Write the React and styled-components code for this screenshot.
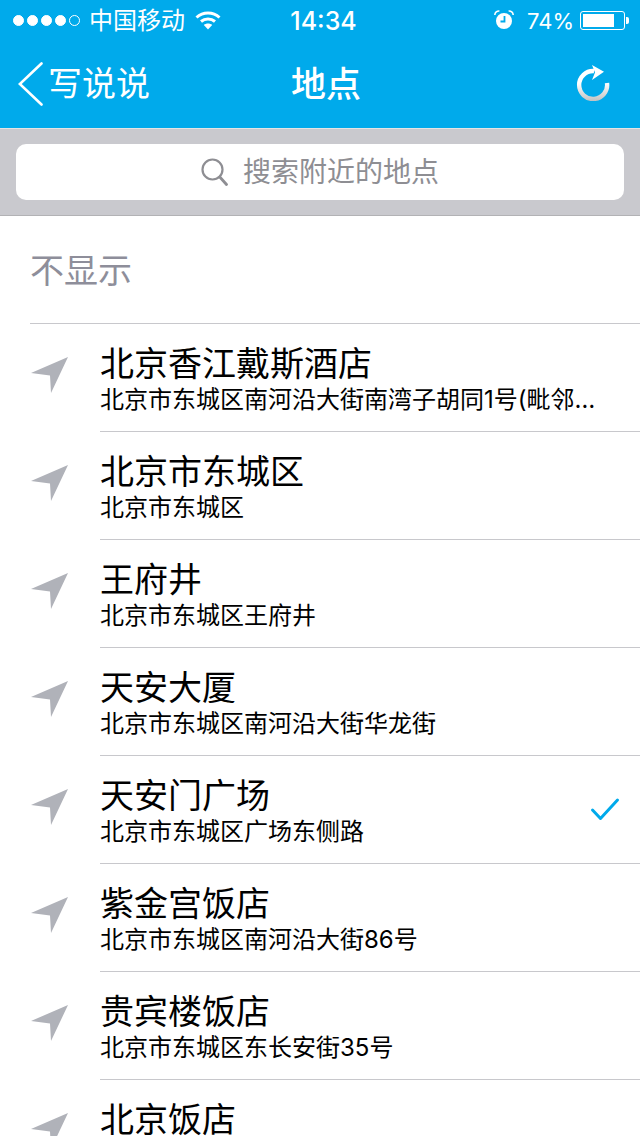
import styled, { createGlobalStyle } from 'styled-components';

const GlobalStyle = createGlobalStyle`
    html, body {
        margin: 0;
        padding: 0;
        background: #fff;
    }
    * {
        box-sizing: border-box;
    }
`;

const Page = styled.div`
    width: 640px;
    height: 1136px;
    overflow: hidden;
    background: #fff;
    font-family: "Inter", "Noto Sans CJK SC", sans-serif;
`;

const Header = styled.header`
    height: 128px;
    background: #00aaeb;
    color: #fff;
`;

const StatusBar = styled.div`
    height: 40px;
    display: grid;
    grid-template-columns: 1fr auto 1fr;
    align-items: center;
    padding: 0 11px 0 13px;
`;

const StatusLeft = styled.div`
    display: flex;
    align-items: center;
`;

const StatusRight = styled.div`
    display: flex;
    align-items: center;
    justify-content: flex-end;
`;

const Signal = styled.div`
    display: flex;
    gap: 3px;
    margin-right: 9px;
`;

const Dot = styled.span`
    width: 11px;
    height: 11px;
    border-radius: 50%;
    border: 1px solid #fff;
    background: ${(p) => (p.$on ? '#fff' : 'transparent')};
`;

const Carrier = styled.span`
    font-size: 24px;
    line-height: 30px;
    margin: 2px 10px 0 0;
`;

const Clock = styled.span`
    font-size: 25px;
    font-weight: 500;
    line-height: 30px;
    margin: 2px 0 0 5px;
`;

const Percent = styled.span`
    font-size: 22px;
    line-height: 30px;
    margin: 1px 6px 0 13px;
`;

const Battery = styled.div`
    width: 45px;
    height: 19px;
    border: 1px solid #fff;
    border-radius: 3px;
    padding: 2px;
    margin-right: 4px;
    position: relative;

    &::after {
        content: '';
        position: absolute;
        right: -5px;
        top: 5px;
        width: 3px;
        height: 7px;
        background: #fff;
        border-radius: 0 2px 2px 0;
    }
`;

const BatteryFill = styled.div`
    width: 80%;
    height: 100%;
    background: #fff;
`;

const NavBar = styled.nav`
    height: 88px;
    display: grid;
    grid-template-columns: 1fr auto 1fr;
    align-items: center;
    padding: 0 6px 0 18px;
`;

const BackLink = styled.div`
    display: flex;
    align-items: center;
    gap: 5px;
`;

const BackText = styled.span`
    font-size: 34px;
    line-height: 44px;
`;

const NavTitle = styled.h1`
    margin: 0;
    font-size: 35px;
    font-weight: 500;
    line-height: 44px;
`;

const NavRight = styled.div`
    display: flex;
    justify-content: flex-end;
    padding: 0 24px 2px 0;
`;

const SearchWrap = styled.div`
    height: 88px;
    padding: 15px 16px 15px;
    background: #c9c9ce;
    border-top: 1px solid #e4e4e4;
    border-bottom: 1px solid #b2b2b5;
`;

const SearchBox = styled.div`
    height: 56px;
    background: #fff;
    border-radius: 10px;
    display: flex;
    align-items: center;
    justify-content: center;
    gap: 15px;
`;

const SearchText = styled.span`
    font-size: 28px;
    line-height: 36px;
    color: #8e8e93;
`;

const NoneRow = styled.div`
    height: 108px;
    margin-left: 30px;
    display: flex;
    align-items: center;
    padding-bottom: 3px;
    border-bottom: 1px solid #c8c8cc;
    font-size: 34px;
    color: #8e8e9a;
`;

const Row = styled.div`
    height: 108px;
    display: flex;
    padding-left: 30px;
`;

const RowIcon = styled.div`
    width: 70px;
    padding-top: 32px;
    flex-shrink: 0;
`;

const RowBody = styled.div`
    flex: 1;
    min-width: 0;
    display: flex;
    align-items: center;
    border-bottom: 1px solid #c8c8cc;
`;

const RowText = styled.div`
    flex: 1;
    min-width: 0;
    padding: 20px 44px 0 0;
    align-self: flex-start;
`;

const RowTitle = styled.div`
    font-size: 34px;
    line-height: 40px;
    color: #000;
    white-space: nowrap;
`;

const RowSub = styled.div`
    font-size: 24px;
    line-height: 31px;
    color: #000;
    white-space: nowrap;
    overflow: hidden;
    text-overflow: ellipsis;
`;

const CheckSlot = styled.div`
    width: 50px;
    flex-shrink: 0;
    display: flex;
`;

const places = [
    { name: '北京香江戴斯酒店', addr: '北京市东城区南河沿大街南湾子胡同1号(毗邻王府井大街)' },
    { name: '北京市东城区', addr: '北京市东城区' },
    { name: '王府井', addr: '北京市东城区王府井' },
    { name: '天安大厦', addr: '北京市东城区南河沿大街华龙街' },
    { name: '天安门广场', addr: '北京市东城区广场东侧路', checked: true },
    { name: '紫金宫饭店', addr: '北京市东城区南河沿大街86号' },
    { name: '贵宾楼饭店', addr: '北京市东城区东长安街35号' },
    { name: '北京饭店', addr: '北京市东城区东长安街33号' },
];

const WifiIcon = () => (
    <svg width="26" height="20" viewBox="0 0 26 20" fill="none" stroke="#fff" strokeWidth="3">
        <path d="M1.5 7.5C8 1.5 18 1.5 24.5 7.5" />
        <path d="M6 11.5C10 8 16 8 20 11.5" />
        <path d="M13 19.5L8.8 15C11 13 15 13 17.2 15Z" fill="#fff" stroke="none" />
    </svg>
);

const AlarmIcon = () => (
    <svg width="20" height="20" viewBox="0 0 20 20">
        <circle cx="10" cy="11" r="8" fill="#fff" />
        <path d="M0.8 5C1 2.4 3 0.8 5.4 1" fill="none" stroke="#fff" strokeWidth="1.6" />
        <path d="M19.2 5C19 2.4 17 0.8 14.6 1" fill="none" stroke="#fff" strokeWidth="1.6" />
        <path d="M10.5 6V11.5H6.5" fill="none" stroke="#00aaeb" strokeWidth="1.8" />
    </svg>
);

const BackIcon = () => (
    <svg width="25" height="44" viewBox="0 0 25 44" fill="none" stroke="#fff" strokeWidth="2.6" strokeLinecap="round">
        <path d="M23.5 1.5L1.8 22L23.5 42.5" />
    </svg>
);

const RefreshIcon = () => (
    <svg width="34" height="36" viewBox="0 0 34 36" fill="none">
        <defs>
            <linearGradient id="refreshShade" gradientUnits="userSpaceOnUse" x1="0" y1="6" x2="0" y2="36">
                <stop offset="0.4" stopColor="#ffffff" />
                <stop offset="1" stopColor="#c2c2c2" />
            </linearGradient>
        </defs>
        <path d="M18 6A14 14 0 1 0 31 18" stroke="url(#refreshShade)" strokeWidth="4.4" />
        <path d="M16 0L28 6.7L16 15L19 7.5Z" fill="#fff" />
    </svg>
);

const SearchIcon = () => (
    <svg width="27" height="28" viewBox="0 0 27 28" fill="none" stroke="#8e8e93" strokeWidth="2.2" strokeLinecap="round">
        <circle cx="11.5" cy="11.5" r="10" />
        <path d="M18.8 19L25.5 26.5" strokeWidth="2.8" />
    </svg>
);

const ArrowIcon = () => (
    <svg width="38" height="38" viewBox="0 0 38 38" style={{ display: 'block' }}>
        <path d="M1 17L38 1L21 37L20 19.5Z" fill="#b0b2b9" />
    </svg>
);

const CheckIcon = () => (
    <svg width="30" height="26" viewBox="0 0 30 26" fill="none" stroke="#00aaeb" strokeWidth="3" strokeLinecap="round" strokeLinejoin="round">
        <path d="M2.5 13L10.5 21.5L27.5 3" />
    </svg>
);

export default function App() {
    return (
        <Page>
            <GlobalStyle />
            <Header>
                <StatusBar>
                    <StatusLeft>
                        <Signal>
                            <Dot $on />
                            <Dot $on />
                            <Dot $on />
                            <Dot $on />
                            <Dot />
                        </Signal>
                        <Carrier>中国移动</Carrier>
                        <WifiIcon />
                    </StatusLeft>
                    <Clock>14:34</Clock>
                    <StatusRight>
                        <AlarmIcon />
                        <Percent>74%</Percent>
                        <Battery>
                            <BatteryFill />
                        </Battery>
                    </StatusRight>
                </StatusBar>
                <NavBar>
                    <BackLink>
                        <BackIcon />
                        <BackText>写说说</BackText>
                    </BackLink>
                    <NavTitle>地点</NavTitle>
                    <NavRight>
                        <RefreshIcon />
                    </NavRight>
                </NavBar>
            </Header>
            <SearchWrap>
                <SearchBox>
                    <SearchIcon />
                    <SearchText>搜索附近的地点</SearchText>
                </SearchBox>
            </SearchWrap>
            <NoneRow>不显示</NoneRow>
            {places.map((place) => (
                <Row key={place.name}>
                    <RowIcon>
                        <ArrowIcon />
                    </RowIcon>
                    <RowBody>
                        <RowText>
                            <RowTitle>{place.name}</RowTitle>
                            <RowSub>{place.addr}</RowSub>
                        </RowText>
                        {place.checked && (
                            <CheckSlot>
                                <CheckIcon />
                            </CheckSlot>
                        )}
                    </RowBody>
                </Row>
            ))}
        </Page>
    );
}
